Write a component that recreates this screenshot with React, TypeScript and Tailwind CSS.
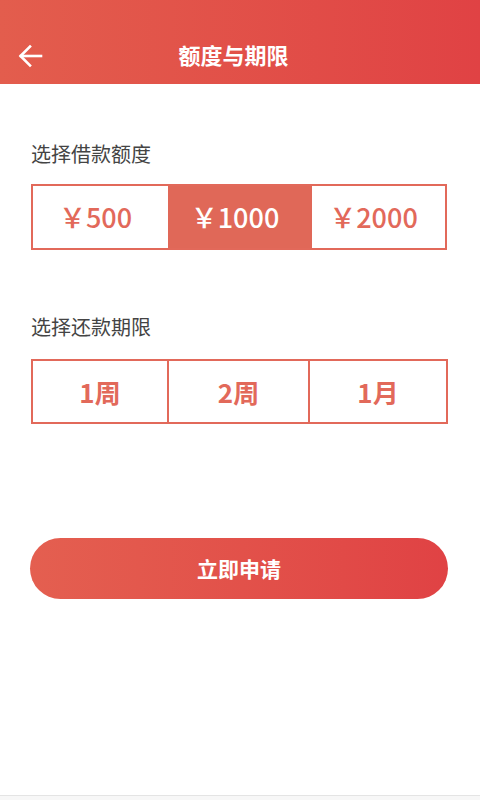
import React, { useState } from 'react';

const amounts = ['￥500', '￥1000', '￥2000'];
const periods = ['1周', '2周', '1月'];

const App: React.FC = () => {
  const [amount, setAmount] = useState(1);
  const [period, setPeriod] = useState(-1);

  return (
    <div className="relative w-[480px] h-[800px] bg-white overflow-hidden font-['Noto_Sans_CJK_SC','Noto_Sans',sans-serif]">
      {/* Header */}
      <header className="h-[84px] pt-[24px] bg-gradient-to-r from-[#e35d4d] to-[#e04244] text-white">
        <div className="relative h-[60px] pr-[13px] flex items-center justify-center">
          <button className="absolute left-[15px] top-[17px] w-[30px] h-[30px] flex items-center justify-center">
            <svg width="26" height="26" viewBox="0 0 26 26" fill="none" stroke="white" strokeWidth="2.6" strokeLinecap="square">
              <path d="M4 13h20" />
              <path d="M13 3.5L3.5 13L13 22.5" strokeLinejoin="miter" />
            </svg>
          </button>
          <h1 className="text-[22px] font-bold leading-none">额度与期限</h1>
        </div>
      </header>

      {/* Amount */}
      <section className="px-[31px]">
        <p className="mt-[56px] text-[20px] leading-[28px] text-[#444]">选择借款额度</p>
        <div className="mt-[16px] w-[416px] h-[66px] flex border-2 border-[#e2695a]">
          {amounts.map((a, i) => (
            <button
              key={a}
              onClick={() => setAmount(i)}
              className={`h-full pr-[10px] flex items-center justify-center text-[27px] font-medium ${
                i === 0 ? 'w-[135px]' : i === 1 ? 'w-[144px]' : 'flex-1'
              } ${amount === i ? 'bg-[#e06858] text-white' : 'text-[#e2695a]'}`}
            >
              {a}
            </button>
          ))}
        </div>
      </section>

      {/* Period */}
      <section className="px-[31px]">
        <p className="mt-[63px] text-[20px] leading-[28px] text-[#444]">选择还款期限</p>
        <div className="mt-[18px] w-[417px] h-[65px] flex border-2 border-[#e2695a]">
          {periods.map((p, i) => (
            <button
              key={p}
              onClick={() => setPeriod(i)}
              className={`h-full flex items-center justify-center text-[26px] font-bold ${
                i === 0 ? 'w-[136px] border-r-2 border-[#e2695a]' : i === 1 ? 'w-[141px] border-r-2 border-[#e2695a]' : 'flex-1'
              } ${period === i ? 'bg-[#e06858] text-white' : 'text-[#e2695a]'}`}
            >
              {p}
            </button>
          ))}
        </div>
      </section>

      {/* Submit */}
      <div className="px-[30px] mt-[114px]">
        <button className="w-[418px] h-[61px] rounded-full bg-gradient-to-r from-[#e45f50] to-[#e04244] text-white text-[21px] font-bold">
          立即申请
        </button>
      </div>

      {/* Bottom bar edge */}
      <div className="absolute left-0 right-0 bottom-0 h-[5px] bg-[#f7f7f7] border-t border-[#e4e4e4]" />
    </div>
  );
};

export default App;
